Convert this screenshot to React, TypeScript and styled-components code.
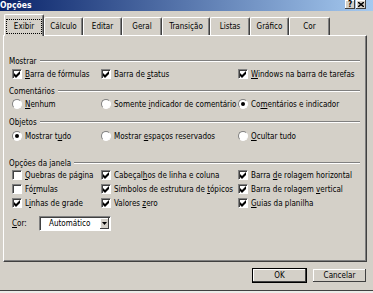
import React from 'react'
import styled, { createGlobalStyle } from 'styled-components'

const GlobalStyle = createGlobalStyle`
  html, body {
    margin: 0;
    padding: 0;
    background: #d4d0c8;
  }
  body {
    font-family: "DejaVu Sans Condensed", "DejaVu Sans", sans-serif;
    font-stretch: condensed;
    font-size: 8px;
    color: #000;
  }
`

const Window = styled.div`
  width: 373px;
  height: 293px;
  overflow: hidden;
  display: flex;
  flex-direction: column;
  background: #d4d0c8;
`

const TitleBar = styled.div`
  height: 11px;
  flex: none;
  display: flex;
  align-items: center;
  justify-content: space-between;
  padding-right: 7px;
  background: linear-gradient(to right, #0a246a, #a6caf0);
`

const Title = styled.span`
  color: #fff;
  font-weight: bold;
  font-size: 8.5px;
  line-height: 11px;
`

const TitleButtons = styled.div`
  display: flex;
  gap: 1px;
  align-self: flex-start;
`

const TitleButton = styled.div`
  width: 10px;
  height: 9px;
  display: flex;
  align-items: center;
  justify-content: center;
  background: #d4d0c8;
  box-shadow: inset -1px -1px #404040, inset 1px 1px #fff;
  font-weight: bold;
  font-size: 8px;
  line-height: 9px;
`

const Body = styled.div`
  flex: 1;
  display: flex;
  flex-direction: column;
  padding: 3px 6px 0 3px;
`

const TabStrip = styled.div`
  display: flex;
  align-items: flex-end;
  height: 21px;
  margin-left: 1px;
  position: relative;
  z-index: 1;
`

const Tab = styled.div<{ $w: number; $active?: boolean }>`
  width: ${(p) => p.$w}px;
  height: ${(p) => (p.$active ? 22 : 18)}px;
  margin-bottom: ${(p) => (p.$active ? -1 : 0)}px;
  padding-top: ${(p) => (p.$active ? 2 : 0)}px;
  box-sizing: border-box;
  display: flex;
  align-items: center;
  justify-content: center;
  background: #d4d0c8;
  border-left: 1px solid #fff;
  border-top: 1px solid #fff;
  border-right: 1px solid #404040;
  border-radius: 2px 2px 0 0;
  box-shadow: inset -1px 0 #808080;
`

const FocusRing = styled.span`
  flex: 1;
  margin: 0 1px 0 1px;
  height: 13px;
  display: flex;
  align-items: center;
  justify-content: center;
  border: 1px dotted #000;
`

const Panel = styled.div`
  height: 227px;
  box-sizing: border-box;
  display: flex;
  flex-direction: column;
  padding-top: 19px;
  border-left: 1px solid #fff;
  border-top: 1px solid #fff;
  border-right: 1px solid #404040;
  border-bottom: 1px solid #404040;
  box-shadow: inset -1px -1px #808080;
`

const GroupHeader = styled.div<{ $gap: number }>`
  display: flex;
  align-items: center;
  gap: 3px;
  height: 12px;
  padding: 0 6px 0 5px;
  margin-top: ${(p) => p.$gap}px;
`

const GroupLine = styled.div`
  flex: 1;
  height: 0;
  border-top: 1px solid #808080;
  border-bottom: 1px solid #fff;
`

const Row = styled.div<{ $gap: number }>`
  display: grid;
  grid-template-columns: 89px 137px 1fr;
  align-items: center;
  height: 12px;
  padding-left: 8px;
  margin-top: ${(p) => p.$gap}px;
`

const Option = styled.label`
  display: flex;
  align-items: center;
  gap: 3px;
  white-space: nowrap;
`

const CheckBox = styled.span`
  width: 10px;
  height: 10px;
  box-sizing: border-box;
  flex: none;
  display: flex;
  align-items: center;
  justify-content: center;
  background: #fff;
  border: 1px solid;
  border-color: #808080 #fff #fff #808080;
  box-shadow: inset 1px 1px #404040;
`

const Radio = styled.span`
  width: 10px;
  height: 10px;
  box-sizing: border-box;
  flex: none;
  display: flex;
  align-items: center;
  justify-content: center;
  background: #fff;
  border-radius: 50%;
  border: 1px solid;
  border-color: #808080 #fff #fff #808080;
`

const RadioDot = styled.span`
  width: 4px;
  height: 4px;
  border-radius: 50%;
  background: #000;
`

const Key = styled.span`
  text-decoration: underline;
`

const ColorRow = styled.div`
  display: flex;
  align-items: center;
  height: 16px;
  margin-top: 6px;
  padding-left: 8px;
`

const ColorLabel = styled.span`
  width: 27px;
`

const Combo = styled.div`
  width: 72px;
  height: 15px;
  box-sizing: border-box;
  display: flex;
  align-items: center;
  background: #fff;
  border: 1px solid;
  border-color: #808080 #fff #fff #808080;
  box-shadow: inset 1px 1px #404040;
  padding: 1px 1px 1px 9px;
`

const ComboText = styled.span`
  flex: 1;
`

const ComboButton = styled.span`
  width: 9px;
  height: 11px;
  display: flex;
  align-items: center;
  justify-content: center;
  background: #d4d0c8;
  box-shadow: inset -1px -1px #404040, inset 1px 1px #fff;
`

const Footer = styled.div`
  display: flex;
  justify-content: flex-end;
  gap: 5px;
  margin-top: 6px;
`

const Button = styled.div<{ $default?: boolean }>`
  width: 55px;
  height: 15px;
  box-sizing: border-box;
  display: flex;
  align-items: center;
  justify-content: center;
  background: #d4d0c8;
  border: 1px solid ${(p) => (p.$default ? '#000' : 'transparent')};
  box-shadow: inset -1px -1px #404040, inset 1px 1px #fff;
`

const BottomEdge = styled.div`
  height: 3px;
  flex: none;
  box-sizing: border-box;
  border-top: 1px solid #404040;
  background: #ecebe8;
`

function Hot({ text, at }: { text: string; at: number }) {
  return (
    <span>
      {text.slice(0, at)}
      <Key>{text[at]}</Key>
      {text.slice(at + 1)}
    </span>
  )
}

type Item = { kind: 'check' | 'radio'; text: string; key: string; on: boolean }

function hotIndex(text: string, key: string) {
  const i = text.indexOf(key)
  return i < 0 ? 0 : i
}

function Control({ item }: { item: Item }) {
  return (
    <Option>
      {item.kind === 'check' ? (
        <CheckBox>
          {item.on && (
            <svg width="7" height="7" viewBox="0 0 7 7">
              <path d="M0 2 L2 4 L6 0 L6 3 L2 7 L0 5 Z" fill="#000" />
            </svg>
          )}
        </CheckBox>
      ) : (
        <Radio>{item.on && <RadioDot />}</Radio>
      )}
      <Hot text={item.text} at={hotIndex(item.text, item.key)} />
    </Option>
  )
}

const tabs = [
  { label: 'Exibir', w: 40 },
  { label: 'Cálculo', w: 39 },
  { label: 'Editar', w: 39 },
  { label: 'Geral', w: 40 },
  { label: 'Transição', w: 48 },
  { label: 'Listas', w: 40 },
  { label: 'Gráfico', w: 39 },
  { label: 'Cor', w: 41 },
]

const c = (text: string, key: string, on: boolean): Item => ({ kind: 'check', text, key, on })
const r = (text: string, key: string, on: boolean): Item => ({ kind: 'radio', text, key, on })

const groups: { title: string; gap: number; rows: { gap: number; items: Item[] }[] }[] = [
  {
    title: 'Mostrar',
    gap: 0,
    rows: [
      {
        gap: 1,
        items: [
          c('Barra de fórmulas', 'B', true),
          c('Barra de status', 'st', true),
          c('Windows na barra de tarefas', 'W', true),
        ],
      },
    ],
  },
  {
    title: 'Comentários',
    gap: 5,
    rows: [
      {
        gap: 1,
        items: [
          r('Nenhum', 'N', false),
          r('Somente indicador de comentário', 'in', false),
          r('Comentários e indicador', 'm', true),
        ],
      },
    ],
  },
  {
    title: 'Objetos',
    gap: 6,
    rows: [
      {
        gap: 2,
        items: [
          r('Mostrar tudo', 'u', true),
          r('Mostrar espaços reservados', 'es', false),
          r('Ocultar tudo', 'O', false),
        ],
      },
    ],
  },
  {
    title: 'Opções da janela',
    gap: 15,
    rows: [
      {
        gap: 0,
        items: [
          c('Quebras de página', 'Q', false),
          c('Cabeçalhos de linha e coluna', 'h', true),
          c('Barra de rolagem horizontal', 'd', true),
        ],
      },
      {
        gap: 2,
        items: [
          c('Fórmulas', 'r', false),
          c('Símbolos de estrutura de tópicos', 'tó', true),
          c('Barra de rolagem vertical', 've', true),
        ],
      },
      {
        gap: 2,
        items: [
          c('Linhas de grade', 'i', true),
          c('Valores zero', 'z', true),
          c('Guias da planilha', 'G', true),
        ],
      },
    ],
  },
]

export default function App() {
  return (
    <Window>
      <GlobalStyle />
      <TitleBar>
        <Title>Opções</Title>
        <TitleButtons>
          <TitleButton>?</TitleButton>
          <TitleButton>
            <svg width="6" height="5" viewBox="0 0 6 5">
              <path d="M0 0 L6 5 M6 0 L0 5" stroke="#000" strokeWidth="1.4" />
            </svg>
          </TitleButton>
        </TitleButtons>
      </TitleBar>
      <Body>
        <TabStrip>
          {tabs.map((t, i) =>
            i === 0 ? (
              <Tab key={t.label} $w={t.w} $active>
                <FocusRing>{t.label}</FocusRing>
              </Tab>
            ) : (
              <Tab key={t.label} $w={t.w}>
                {t.label}
              </Tab>
            )
          )}
        </TabStrip>
        <Panel>
          {groups.map((g) => (
            <React.Fragment key={g.title}>
              <GroupHeader $gap={g.gap}>
                {g.title}
                <GroupLine />
              </GroupHeader>
              {g.rows.map((row, i) => (
                <Row key={i} $gap={row.gap}>
                  {row.items.map((item) => (
                    <Control key={item.text} item={item} />
                  ))}
                </Row>
              ))}
            </React.Fragment>
          ))}
          <ColorRow>
            <ColorLabel>
              <Hot text="Cor:" at={0} />
            </ColorLabel>
            <Combo>
              <ComboText>Automático</ComboText>
              <ComboButton>
                <svg width="5" height="3" viewBox="0 0 5 3">
                  <path d="M0 0 L5 0 L2.5 3 Z" fill="#000" />
                </svg>
              </ComboButton>
            </Combo>
          </ColorRow>
        </Panel>
        <Footer>
          <Button $default>OK</Button>
          <Button>Cancelar</Button>
        </Footer>
      </Body>
      <BottomEdge />
    </Window>
  )
}
